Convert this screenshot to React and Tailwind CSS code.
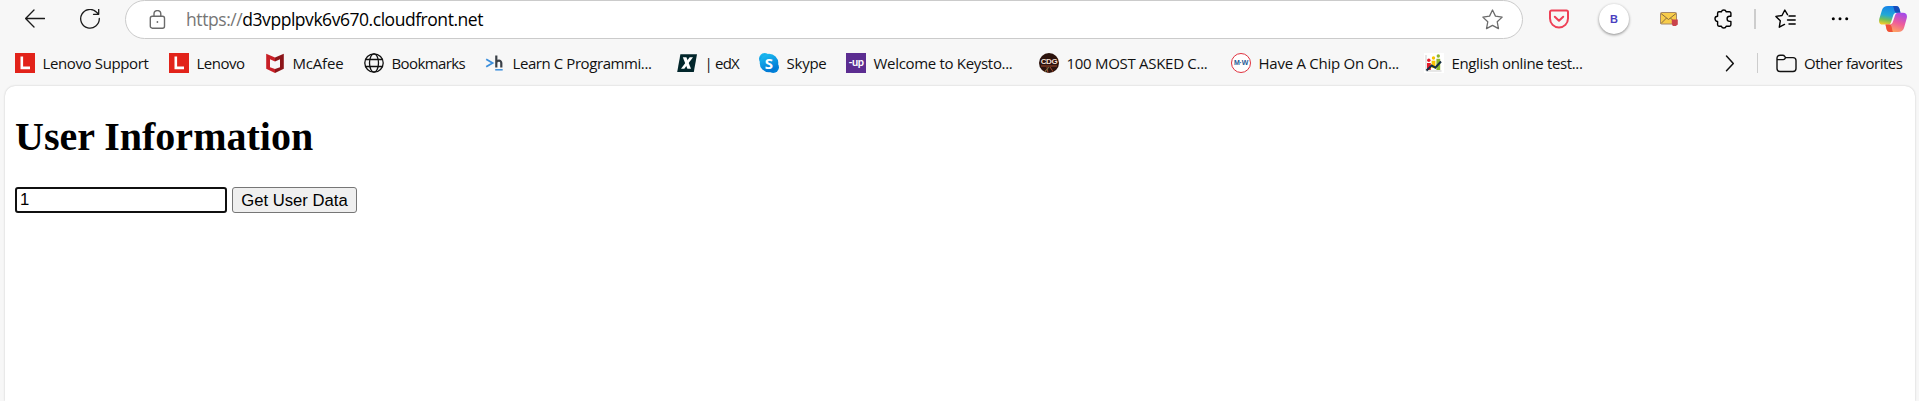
const stroke = { fill: 'none', stroke: 'currentColor', strokeWidth: 1.5, strokeLinecap: 'round', strokeLinejoin: 'round' };

function Svg({ className = 'w-5 h-5', box = '0 0 20 20', children, ...rest }) {
  return (
    <svg className={`shrink-0 ${className}`} viewBox={box} {...rest}>
      {children}
    </svg>
  );
}

const LenovoIcon = () => (
  <span className="flex h-5 w-5 shrink-0 items-center justify-center bg-[#e2231a]">
    <Svg><path d="M6.8 3.5v11.4H15" fill="none" stroke="#fff" strokeWidth="2.6" /></Svg>
  </span>
);

const McAfeeIcon = () => (
  <Svg>
    <path d="M1.2.7 10 4.4v4L5 6.3v8L10 16v4l-8.8-4.2z" fill="#c81f26" />
    <path d="M18.8.7 10 4.4v4l5-2.1v8L10 16v4l8.8-4.2z" fill="#8c1519" />
  </Svg>
);

const GlobeIcon = () => (
  <Svg {...stroke} strokeWidth="1.3">
    <circle cx="10" cy="10" r="9.2" />
    <ellipse cx="10" cy="10" rx="4.5" ry="9.2" />
    <path d="M1.6 6.5h16.8M1.6 13.5h16.8" />
  </Svg>
);

const LearnIcon = () => (
  <Svg>
    <path d="M1.2 6.2 7.6 10l-6.4 3.8" fill="none" stroke="#3c8fdc" strokeWidth="1.8" />
    <path d="M11.3 2.5v12M11.3 9.5c.5-2.2 5-2.8 5 .5v4.5" fill="none" stroke="#3a4047" strokeWidth="2.2" />
    <path d="M10.2 16.8h7.5" stroke="#3c8fdc" strokeWidth="1.5" />
  </Svg>
);

const EdxIcon = () => (
  <Svg>
    <path d="M3.4 1.2H20L16.8 19H.2z" fill="#02262b" />
    <path d="M5.8 4.2h3.6l4.6 11.5h-3.6z" fill="#fff" />
    <path d="M4 15.7h3.3L16 4.2h-3.3z" fill="#fff" />
  </Svg>
);

const SkypeIcon = () => (
  <span className="relative flex h-5 w-5 shrink-0 items-center justify-center">
    <Svg>
      <defs>
        <linearGradient id="skype" x1="0" y1="0" x2=".4" y2="1">
          <stop stopColor="#1fc4f4" />
          <stop offset="1" stopColor="#0078d4" />
        </linearGradient>
      </defs>
      <circle cx="5.8" cy="5.8" r="5.8" fill="url(#skype)" />
      <circle cx="14.2" cy="14.2" r="5.8" fill="#0082d9" />
      <circle cx="10" cy="10" r="9.300" fill="url(#skype)" />
    </Svg>
    <span className="absolute inset-0 text-center font-['Open_Sans',sans-serif] text-[15px] leading-[20px] font-bold text-white">S</span>
  </span>
);

const UpIcon = () => (
  <span className="flex h-5 w-5 shrink-0 items-center justify-center bg-[#5c2d91] font-['Lato',sans-serif] text-[11px] leading-none font-bold tracking-[-0.5px] whitespace-nowrap text-white">
    <span className="pb-[2px]">-up</span>
  </span>
);

const CdgIcon = () => (
  <span className="relative flex h-5 w-5 shrink-0 overflow-hidden rounded-full bg-[#2c130d]">
    <Svg><path d="M2 13h16M9 15l-5 5M11 14l4 6M8 14l1 6" stroke="#9c4a2c" strokeWidth="1" /><path d="m10 14-4 5" stroke="#617243" strokeWidth="1" /></Svg>
    <span className="absolute inset-x-0 top-[4px] text-center font-['Liberation_Sans',sans-serif] text-[8px] leading-[10px] font-bold tracking-[-0.4px] text-[#f3dfd3]">CDG</span>
  </span>
);

const MwIcon = () => (
  <span className="flex h-5 w-5 shrink-0 items-center justify-center rounded-full border border-[#e0323f] bg-white font-['Liberation_Sans',sans-serif] text-[7px] leading-none font-bold tracking-[-0.2px] whitespace-nowrap text-[#265a96]">
    M·W
  </span>
);

const PeopleChartIcon = () => (
  <Svg className="h-5 w-5 bg-white">
    <path d="M2 2v16h15.500" fill="none" stroke="#b9b9b9" strokeWidth=".7" />
    <circle cx="4.800" cy="7.300" r="1.700" fill="#e51d2b" />
    <path d="M3 10h3.800v7H3z" fill="#e51d2b" />
    <circle cx="9.500" cy="5" r="1.700" fill="#f8c300" />
    <path d="M7.600 7.700h3.800V15H7.600z" fill="#f8c300" />
    <circle cx="14.300" cy="3" r="1.700" fill="#8fb72d" />
    <path d="M12.400 5.800h3.800V17h-3.800z" fill="#8fb72d" />
    <path d="m2.500 17.500 5.200-5 3.600 2.200 5.700-6.200" fill="none" stroke="#142c42" strokeWidth="2" />
  </Svg>
);

const bookmarks = [
  { label: 'Lenovo Support', Icon: LenovoIcon, width: 'w-[154px]', tracking: 'tracking-[-0.37px]' },
  { label: 'Lenovo', Icon: LenovoIcon, width: 'w-[96px]', tracking: 'tracking-[-0.5px]' },
  { label: 'McAfee', Icon: McAfeeIcon, width: 'w-[99px]', tracking: 'tracking-[-0.18px]' },
  { label: 'Bookmarks', Icon: GlobeIcon, width: 'w-[121px]', tracking: 'tracking-[-0.6px]' },
  { label: 'Learn C Programmi...', Icon: LearnIcon, width: 'w-[192px]', tracking: 'tracking-[-0.42px]' },
  { label: '| edX', Icon: EdxIcon, width: 'w-[82px]', tracking: 'tracking-[-0.8px]' },
  { label: 'Skype', Icon: SkypeIcon, width: 'w-[87px]', tracking: 'tracking-[-0.24px]' },
  { label: 'Welcome to Keysto...', Icon: UpIcon, width: 'w-[193px]', tracking: 'tracking-[-0.31px]' },
  { label: '100 MOST ASKED C...', Icon: CdgIcon, width: 'w-[192px]', tracking: 'tracking-[-0.29px]' },
  { label: 'Have A Chip On On...', Icon: MwIcon, width: 'w-[193px]', tracking: 'tracking-[-0.25px]' },
  { label: 'English online test...', Icon: PeopleChartIcon, width: 'w-[158px]', tracking: 'tracking-[-0.36px]' },
];

function Toolbar() {
  return (
    <div className="flex h-[38px] items-center pl-[25px]">
      <Svg {...stroke} strokeWidth="1.3"><path d="M19.500 9.500H.8M9 1 .6 9.500 9 18" /></Svg>
      <Svg className="ml-[35px] h-5 w-5" {...stroke} strokeWidth="1.3">
        <path d="M19.300 9.500a9.300 9.300 0 1 1-2.700-6.300L18.500 5M18.700.3v5h-5.200" />
      </Svg>
      <div className="ml-[25px] flex h-[39px] w-[1398px] items-center self-start rounded-full border border-[#cbcbcb] bg-white pl-[23px]">
        <Svg className="h-5 w-[17px] text-[#6b6b6b]" box="0 0 17 20" {...stroke} strokeWidth="1.4">
          <rect x="1.300" y="6.200" width="14.200" height="12" rx="2" />
          <path d="M5 6V4a3.400 3.400 0 0 1 6.800 0v2" />
          <circle cx="8.400" cy="12" r=".9" fill="currentColor" stroke="none" />
        </Svg>
        <div className="ml-[20px] flex-1 whitespace-nowrap pb-[1px] font-['Open_Sans',sans-serif] text-[17.5px] leading-[26px]">
          <span className="tracking-[-0.42px] text-[#767676]">https://</span>
          <span className="tracking-[-0.46px] text-black">d3vpplpvk6v670.cloudfront.net</span>
        </div>
        <Svg className="mr-[19px] h-[21px] w-[21px] text-[#6b6b6b]" {...stroke} strokeWidth="1.2">
          <path d="m10 .9 2.800 5.900 6.400.9-4.700 4.500 1.200 6.500L10 15.600l-5.700 3.100 1.200-6.500L.8 7.700l6.400-.9z" />
        </Svg>
      </div>
      <Svg className="ml-[26px] h-5 w-5" fill="none" stroke="#ee4056" strokeWidth="2" strokeLinecap="round" strokeLinejoin="round">
        <path d="M2.500 1.500h15a1.500 1.500 0 0 1 1.500 1.500v6.500a9 9 0 0 1-18 0V3a1.500 1.500 0 0 1 1.500-1.500zM5.800 7.800l4.200 4 4.200-4" />
      </Svg>
      <span className="ml-[30px] flex h-[30px] w-[30px] items-center justify-center rounded-full bg-white font-['Liberation_Sans',sans-serif] text-[11px] font-bold text-[#4a3fc0] shadow-[0_1px_3px_rgba(0,0,0,0.45)]">B</span>
      <Svg className="ml-[31px] h-5 w-5">
        <rect x=".5" y="3.500" width="16" height="11.500" rx="1" fill="#f8cc4a" stroke="#a5886a" />
        <path d="m1 4.500 7.500 6 7.500-6M1 14.500l5.500-5.500M16 14.500 10.500 9" fill="none" stroke="#7d603d" strokeWidth=".9" />
        <path d="M11.800 10.500h6v5l-2 1.500h-3l-1-2z" fill="#c9434b" />
      </Svg>
      <Svg className="ml-[34px] h-5 w-5 text-black" {...stroke} strokeWidth="1.4">
        <path d="M7.400 2.800a2.500 2.500 0 0 1 4.800 0h3.300a1.400 1.400 0 0 1 1.400 1.400v3h-1.200a2.600 2.600 0 0 0 0 5.200h1.200v3.400a1.400 1.400 0 0 1-1.400 1.400h-3.300a2.500 2.500 0 0 1-4.800 0H5a1.400 1.400 0 0 1-1.400-1.400v-3.400a2.500 2.500 0 0 1 0-5.200v-3A1.400 1.400 0 0 1 5 2.800z" />
      </Svg>
      <span className="ml-[20px] h-5 w-[2px] bg-[#cdcdcd]" />
      <Svg className="ml-[19px] h-5 w-[21px] text-black" box="0 0 21 20" {...stroke} strokeWidth="1.4">
        <path d="M12.500 5.700 9.800 1 7 6.500l-6.100.9 4.400 4.400-1 6.400 5.200-2.800M14 7h6.200M12.500 11h7.700M14 15h6.200" />
      </Svg>
      <Svg className="ml-[34px] h-5 w-5"><g fill="#000"><circle cx="3.300" cy="9.700" r="1.500" /><circle cx="10" cy="9.700" r="1.500" /><circle cx="16.700" cy="9.700" r="1.500" /></g></Svg>
      <Svg className="ml-[29px] h-[26px] w-7" box="0 0 28 26">
        <defs>
          <linearGradient id="copilotA" x1=".5" y1="0" x2=".3" y2="1">
            <stop stopColor="#1681ea" /><stop offset=".5" stopColor="#22a9d5" /><stop offset=".75" stopColor="#73bf57" /><stop offset="1" stopColor="#f5cb28" />
          </linearGradient>
          <linearGradient id="copilotB" x1=".7" y1="0" x2=".3" y2="1">
            <stop stopColor="#a54be8" /><stop offset=".5" stopColor="#ee5c9b" /><stop offset="1" stopColor="#ffab5b" />
          </linearGradient>
        </defs>
        <path d="M9 0h8c2 0 3 1.200 3.500 3l1 3.800h-3.800c-2 0-3 1-3.600 3l-2 6.200c-.5 1.800-1.500 2.600-3.300 2.600H4c-3.500 0-4.600-2.400-3.600-6L3 4C3.900 1.500 5.800 0 9 0z" fill="url(#copilotA)" />
        <path d="M14 0h3c2 0 3 1.200 3.500 3l1 3.800h-3.800c-1.200 0-2-1-2.400-2.500C14.800 2.500 14.600.7 14 0z" fill="#174cb9" />
        <path d="M19 26h-8c-2 0-3-1.200-3.500-3l-1-4.400h3.800c2 0 3-1 3.600-2.800l2-6c.6-2 1.500-3 3.400-3H24c3.500 0 4.600 2.200 3.600 6L25 22c-.9 2.500-2.800 4-6 4z" fill="url(#copilotB)" />
        <path d="M14 26h-3c-2 0-3-1.200-3.500-3l-1-4.400h3.600c1.500 0 2.200 1 2.600 2.600.4 1.600.7 4.200 1.300 4.800z" fill="#ee5038" />
      </Svg>
    </div>
  );
}

function BookmarksBar() {
  return (
    <div className="flex h-[47px] items-center pl-[15px] font-['Open_Sans',sans-serif] text-[15px] leading-5 text-[#111]">
      {bookmarks.map(({ label, Icon, width, tracking }) => (
        <div key={label} className={`flex shrink-0 items-center gap-[7.5px] whitespace-nowrap ${width}`}>
          <Icon />
          <span className={`pt-[1px] ${tracking}`}>{label}</span>
        </div>
      ))}
      <Svg className="ml-[138px] h-5 w-5" {...stroke}><path d="m6.500 3 6.800 7.500-6.800 7.200" /></Svg>
      <span className="ml-[17px] h-5 w-px bg-[#cdcdcd]" />
      <Svg className="ml-[18px] h-5 w-[21px]" box="0 0 21 20" {...stroke} strokeWidth="1.4">
        <path d="M1 5.200A3 3 0 0 1 4 2.200h2.700c1 0 1.500.4 2 1.100l.9 1.300H17a3 3 0 0 1 3 3V15.500a3 3 0 0 1-3 3H4a3 3 0 0 1-3-3zM1 6.600h6.300c1 0 1.600-.4 2.300-2" />
      </Svg>
      <span className="ml-[7px] whitespace-nowrap pt-[1px] tracking-[-0.46px]">Other favorites</span>
    </div>
  );
}

export default function App() {
  return (
    <div className="flex h-[401px] w-[1919px] flex-col overflow-hidden bg-[#f7f7f7] text-[#1b1b1b]">
      <Toolbar />
      <div className="h-px" />
      <BookmarksBar />
      <main className="mr-[4px] ml-[5px] flex-1 rounded-t-[10px] bg-white px-[10px] pt-[28px] text-black shadow-[0_0_2px_rgba(0,0,0,0.22)]">
        <h1 className="font-['Liberation_Serif',serif] text-[40px] leading-[46px] font-bold">User Information</h1>
        <div className="mt-[27px] flex gap-[5px] font-['Liberation_Sans',sans-serif] text-[16.67px]">
          <input
            defaultValue="1"
            className="h-[26px] w-[212px] rounded-[3px] border-2 border-[#101010] bg-white px-[3px] outline-none"
          />
          <button className="flex h-[26px] w-[125px] items-center justify-center rounded-[3px] border border-[#767676] bg-[#efefef] whitespace-nowrap">
            Get User Data
          </button>
        </div>
      </main>
    </div>
  );
}
